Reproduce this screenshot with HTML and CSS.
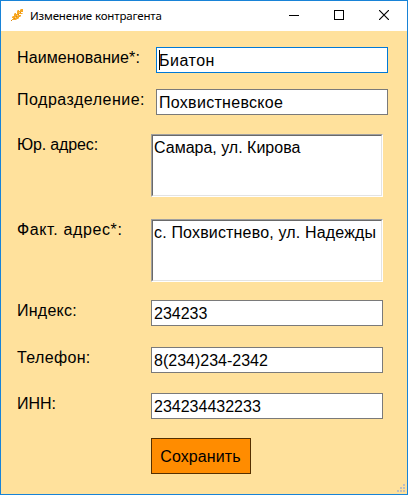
FILE: index.html
```html
<!DOCTYPE html>
<html lang="ru">
<head>
<meta charset="utf-8">
<title>Изменение контрагента</title>
<link rel="stylesheet" href="styles.css">
</head>
<body>
<div class="window">
  <header class="titlebar">
    <svg class="app-icon" width="14" height="14" viewBox="0 0 14 14" shape-rendering="crispEdges">
      <path fill="#f7a823" d="M9 0h3v3H9zM6 1h2v4H6zM8 2h2v3H8zM9 4h3v1H9zM3 4h2v4H3zM5 5h2v3H5zM7 6h3v2H7zM1 7h2v2H1zM2 8h2v2H2zM5 8h3v1H5zM4 9h4v1H4zM2 10h4v1H2zM1 10h1v1H1z"/>
      <path fill="#fbd08a" d="M9 0h1v1H9zM8 3h1v1H8zM6 1h1v1H6zM3 4h1v1H3zM6 6h1v1H6zM4 8h1v1H4zM1 7h1v1H1zM11 4h1v1h-1zM9 7h1v1H9zM7 9h1v1H7zM5 10h1v1H5z"/>
      <path fill="#db8a1c" d="M9 3h1v1H9zM7 5h1v1H7zM5 7h1v1H5zM3 9h1v1H3zM0 11h1v1H0z"/>
    </svg>
    <span class="title">Изменение контрагента</span>
    <div class="controls">
      <svg width="10" height="10" viewBox="0 0 10 10" shape-rendering="crispEdges"><path d="M0 5.5h10" stroke="#000"/></svg>
      <svg width="10" height="10" viewBox="0 0 10 10" shape-rendering="crispEdges"><rect x=".5" y=".5" width="9" height="9" fill="none" stroke="#000"/></svg>
      <svg width="10" height="10" viewBox="0 0 10 10"><path d="M0 0l10 10M10 0L0 10" stroke="#000" stroke-width="1.15"/></svg>
    </div>
  </header>
  <main class="form">
    <div class="row first"><span class="label">Наименование*:</span><div class="field top focused"><i class="caret"></i>Биатон</div></div>
    <div class="row second"><span class="label">Подразделение:</span><div class="field top">Похвистневское</div></div>
    <div class="row legal"><span class="label">Юр. адрес:</span><div class="area"><div class="area-text">Самара, ул. Кирова</div></div></div>
    <div class="row actual"><span class="label">Факт. адрес*:</span><div class="area"><div class="area-text">с. Похвистнево, ул. Надежды</div></div></div>
    <div class="row index"><span class="label">Индекс:</span><div class="field">234233</div></div>
    <div class="row phone"><span class="label">Телефон:</span><div class="field">8(234)234-2342</div></div>
    <div class="row inn"><span class="label">ИНН:</span><div class="field">234234432233</div></div>
    <button class="save">Сохранить</button>
  </main>
  <svg class="grip" width="8" height="8" viewBox="0 0 8 8" shape-rendering="crispEdges"><path fill="#bfbfbf" d="M6 0h2v2H6zM3 3h2v2H3zM6 3h2v2H6zM0 6h2v2H0zM3 6h2v2H3zM6 6h2v2H6z"/></svg>
</div>
</body>
</html>
```
FILE: styles.css
```css
* { box-sizing: border-box; }
body { margin: 0; overflow: hidden; }
.window {
  position: relative;
  width: 408px;
  height: 495px;
  border: 1px solid #1883d7;
  background: #ffe19c;
  color: #000;
  font: 16px/18px "Liberation Sans", Arial, sans-serif;
}
.titlebar {
  display: flex;
  align-items: center;
  height: 30px;
  padding: 0 18px 0 10px;
  background: #fff;
}
.app-icon { margin-right: 5px; }
.title {
  font: 11.5px/16px "Noto Sans", "Open Sans", sans-serif;
  letter-spacing: -0.15px;
  white-space: nowrap;
}
.controls { display: flex; gap: 35px; margin-left: auto; margin-top: -2px; }
.controls svg { display: block; }
.form { padding: 16px 0 0 16px; }
.row { display: flex; align-items: flex-start; }
.label { width: 134px; padding-top: 2px; white-space: nowrap; }
.field {
  position: relative;
  width: 232px;
  height: 26px;
  padding: 4px 2px 2px;
  border: 1px solid #7a7a7a;
  background: #fff;
  white-space: nowrap;
}
.field.top { margin-left: 5px; letter-spacing: 0.3px; }
.field.focused { border-color: #0078d7; letter-spacing: 0.5px; }
.caret {
  position: absolute;
  left: 2px;
  top: 2px;
  width: 1px;
  height: 20px;
  background: #000;
}
.area {
  width: 232px;
  height: 63px;
  border: 1px solid;
  border-color: #a0a0a0 #fff #fff #a0a0a0;
  background: #fff;
}
.area-text {
  height: 61px;
  padding: 3px 1px 1px;
  border: 1px solid;
  border-color: #696969 #e3e3e3 #e3e3e3 #696969;
  white-space: nowrap;
}
.first .label { letter-spacing: 0.1px; }
.second { margin-top: 16px; }
.second .label { letter-spacing: 0.5px; }
.legal { margin-top: 19px; }
.legal .label { letter-spacing: -0.15px; }
.actual { margin-top: 22px; }
.actual .label { letter-spacing: 0.62px; }
.actual .area-text { letter-spacing: 0.17px; }
.index { margin-top: 18px; }
.index .label { letter-spacing: 0.25px; }
.phone { margin-top: 21px; }
.phone .label { letter-spacing: 0.35px; }
.inn { margin-top: 20px; }
.save {
  display: block;
  width: 100px;
  height: 36px;
  margin: 19px 0 0 134px;
  padding: 2px 1px 0 0;
  border: 1px solid #552f00;
  border-radius: 0;
  background: #ff8c00;
  color: #000;
  font: inherit;
  letter-spacing: 0.1px;
  white-space: nowrap;
}
.grip { position: absolute; right: 2px; bottom: 2px; }
```
